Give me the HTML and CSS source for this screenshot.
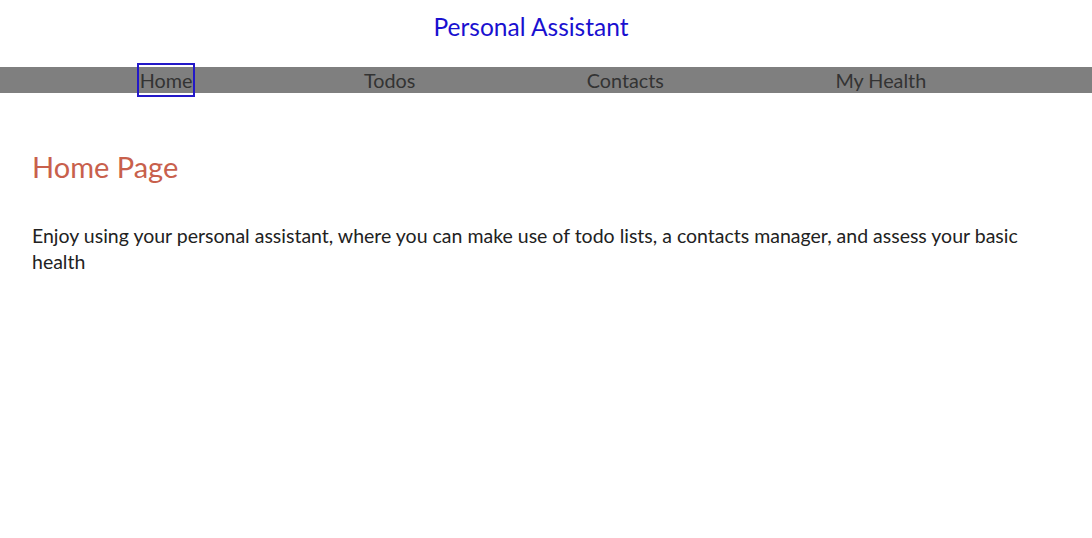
FILE: index.html
```html
<!DOCTYPE html>
<html lang="en">
<head>
<meta charset="utf-8">
<title>Personal Assistant</title>
<link rel="stylesheet" href="styles.css">
</head>
<body>
<header class="site-header">
  <h1 class="site-title">Personal Assistant</h1>
</header>
<nav class="main-nav">
  <ul class="nav-list">
    <li class="nav-item"><a class="nav-link is-focused" href="#">Home</a></li>
    <li class="nav-item"><a class="nav-link" href="#">Todos</a></li>
    <li class="nav-item"><a class="nav-link" href="#">Contacts</a></li>
    <li class="nav-item"><a class="nav-link" href="#">My Health</a></li>
  </ul>
</nav>
<main class="content">
  <h2 class="page-title">Home Page</h2>
  <p class="page-text">Enjoy using your personal assistant, where you can make use of todo lists, a contacts manager, and assess your basic health</p>
</main>
</body>
</html>
```

FILE: styles.css
```css
* { box-sizing: border-box; }
body {
  margin: 0;
  font-family: "Lato", "Liberation Sans", sans-serif;
  background: #fff;
  color: #222;
}
.site-header {
  height: 67px;
  display: flex;
  justify-content: center;
  align-items: center;
  padding: 0 30px 14px 0;
}
.site-title {
  margin: 0;
  font-size: 24.5px;
  font-weight: 400;
  color: #1a10d0;
}
.main-nav {
  background: #7f7f7f;
  height: 26px;
}
.nav-list {
  list-style: none;
  margin: 0;
  padding: 0 80px 0 54px;
  height: 100%;
  display: flex;
  justify-content: space-around;
  align-items: center;
}
.nav-link {
  display: block;
  font-size: 19.8px;
  color: #333;
  text-decoration: none;
  line-height: 25px;
}
.is-focused {
  outline: 2px solid #2318c8;
  outline-offset: 1px;
  padding: 2px 0 1px;
  margin: -1px 0;
}
.content {
  padding: 0 32px;
}
.page-title {
  margin: 56px 0 0;
  font-size: 29px;
  font-weight: 400;
  color: #c8604c;
  line-height: 36px;
}
.page-text {
  margin: 38px 0 0;
  font-size: 19.5px;
  line-height: 26px;
  color: #222;
}
```
